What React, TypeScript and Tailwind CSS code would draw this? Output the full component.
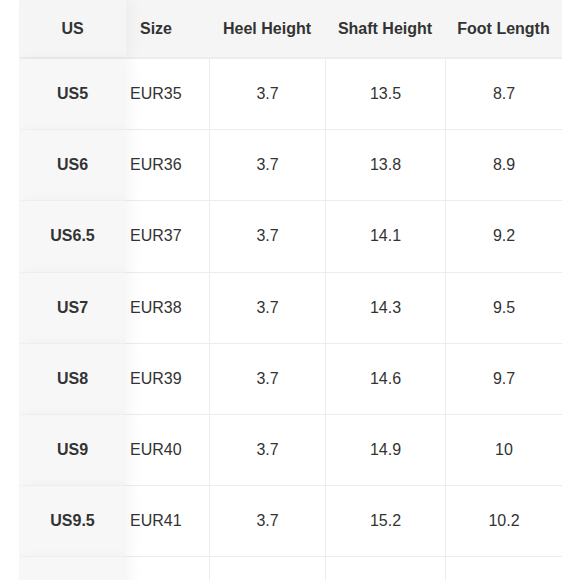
const headers = ["US", "Size", "Heel Height", "Shaft Height", "Foot Length"];

const rows = [
  ["US5", "EUR35", "3.7", "13.5", "8.7"],
  ["US6", "EUR36", "3.7", "13.8", "8.9"],
  ["US6.5", "EUR37", "3.7", "14.1", "9.2"],
  ["US7", "EUR38", "3.7", "14.3", "9.5"],
  ["US8", "EUR39", "3.7", "14.6", "9.7"],
  ["US9", "EUR40", "3.7", "14.9", "10"],
  ["US9.5", "EUR41", "3.7", "15.2", "10.2"],
  ["", "", "", "", ""],
];

const cols = "grid grid-cols-[107px_83px_116px_120px_117px]";

export default function App() {
  return (
    <div
      className="w-[580px] h-[580px] overflow-hidden bg-white pl-[19px] text-[#333]"
      style={{ fontFamily: '"Liberation Sans", Arial, sans-serif' }}
    >
      <div className="w-[543px]">
        <div className={`${cols} h-[59px] bg-[#f5f5f5] border-b-2 border-[#ededed] font-bold text-[16px]`}>
          {headers.map((h, i) => (
            <div
              key={h}
              className={
                i === 0
                  ? "relative z-10 flex items-center justify-center bg-[#f5f5f5] shadow-[6px_0_12px_rgba(0,0,0,0.035)]"
                  : i === 1
                  ? "flex items-center pl-[14px]"
                  : "flex items-center justify-center"
              }
            >
              {h}
            </div>
          ))}
        </div>
        {rows.map((r, ri) => (
          <div key={ri} className={`${cols} h-[71.2px] text-[16px]`}>
            <div className="relative z-10 flex items-center justify-center bg-[#f7f7f7] border-b border-[#f1f1f1] font-bold shadow-[6px_0_12px_rgba(0,0,0,0.035)]">
              {r[0]}
            </div>
            <div className="flex items-center pl-[4px] border-b border-[#ececec]">{r[1]}</div>
            <div className="flex items-center justify-center border-b border-l border-[#ececec]">{r[2]}</div>
            <div className="flex items-center justify-center border-b border-l border-[#ececec]">{r[3]}</div>
            <div className="flex items-center justify-center border-b border-l border-[#ececec]">{r[4]}</div>
          </div>
        ))}
      </div>
    </div>
  );
}
